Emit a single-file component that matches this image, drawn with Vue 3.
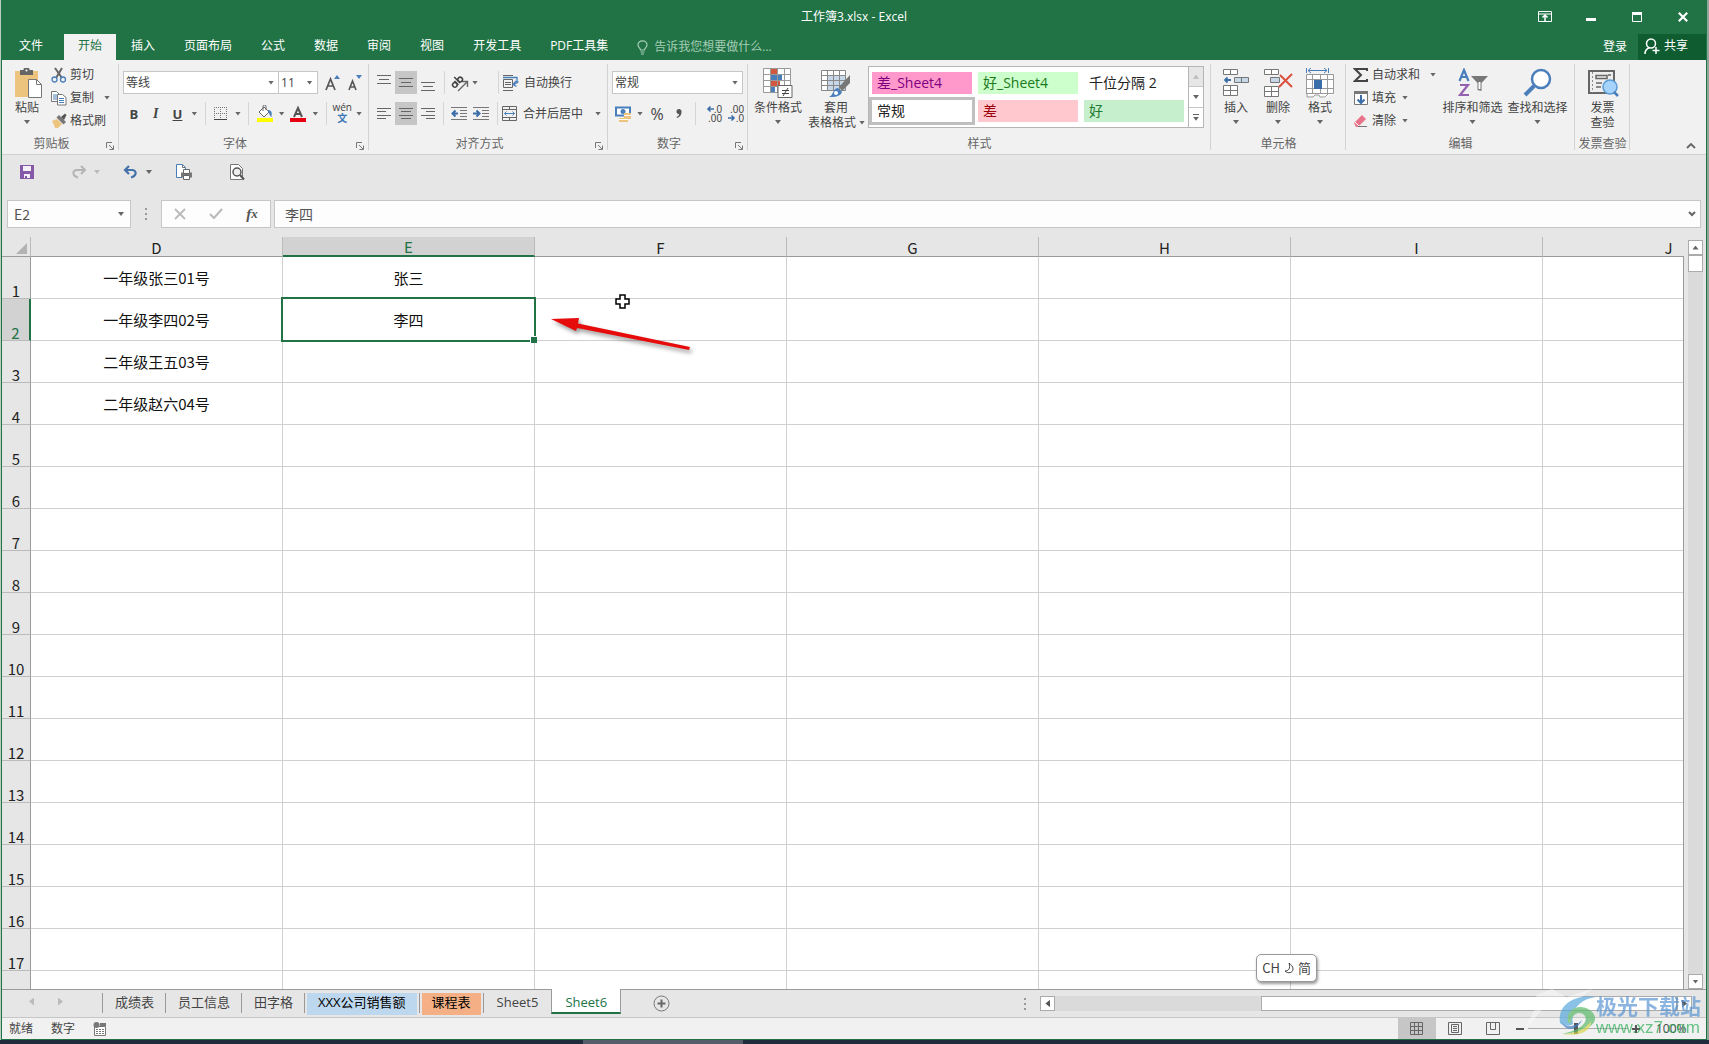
<script setup>
import { ref } from 'vue'

const menus = ['插入', '页面布局', '公式', '数据', '审阅', '视图', '开发工具', 'PDF工具集']
const columns = ['D', 'E', 'F', 'G', 'H', 'I', 'J']
const cells = {
  D1: '一年级张三01号', D2: '一年级李四02号', D3: '二年级王五03号', D4: '二年级赵六04号',
  E1: '张三', E2: '李四',
}
const rows = Array.from({ length: 17 }, (_, i) => i + 1)
const activeCol = 'E'
const activeRow = 2
const nameBox = ref('E2')
const formula = ref('李四')
const styles = [
  { name: '差_Sheet4', kind: 'pink' },
  { name: '好_Sheet4', kind: 'mint' },
  { name: '千位分隔 2', kind: 'plain' },
  { name: '常规', kind: 'picked' },
  { name: '差', kind: 'bad' },
  { name: '好', kind: 'good' },
]
const sheets = [
  { name: '成绩表' }, { name: '员工信息' }, { name: '田字格' },
  { name: 'XXX公司销售额', kind: 'blue' }, { name: '课程表', kind: 'orange' },
  { name: 'Sheet5', kind: 'latin' }, { name: 'Sheet6', kind: 'latin current' },
]
</script>

<template>
  <div class="desktop">
    <div class="app">
      <header class="titlebar">
        <h1>工作簿3.xlsx - Excel</h1>
        <div class="winbtns">
          <button aria-label="功能区显示选项"><svg width="14" height="12" viewBox="0 0 14 12"><path d="M.5 .5h13v10H.5zM1 3h12" fill="none" stroke="#fff" /><path d="M7 4v6M4.500 6.500L7 4l2.500 2.500" fill="none" stroke="#fff" stroke-width="1.500" /></svg></button>
          <button aria-label="最小化"><svg width="10" height="10" viewBox="0 0 10 10"><path d="M0 6h10v3H0z" fill="#fff" /></svg></button>
          <button aria-label="最大化"><svg width="10" height="10" viewBox="0 0 10 10"><path d="M.5 .5h9v9h-9z" fill="none" stroke="#fff" /><path d="M0 0h10v3H0z" fill="#fff" /></svg></button>
          <button aria-label="关闭"><svg width="10" height="10" viewBox="0 0 10 10"><path d="M.8 .8l8.400 8.400M9.200 .8L.8 9.200" stroke="#fff" stroke-width="2.200" /></svg></button>
        </div>
      </header>

      <nav class="menubar">
        <button class="file">文件</button>
        <button class="open">开始</button>
        <button v-for="m in menus" :key="m">{{ m }}</button>
        <button class="tell">
          <svg width="11" height="15" viewBox="0 0 11 15"><path d="M3.500 10C3.500 8 1 7.500 1 4.800a4.500 4 0 0 1 9 0C10 7.500 7.500 8 7.500 10zM3.500 12h4M4 14h3" fill="none" stroke="#a5cdb5" stroke-width="1.200" /></svg>
          告诉我您想要做什么...
        </button>
        <span class="grow"></span>
        <button class="login">登录</button>
        <button class="share">
          <svg width="16" height="17" viewBox="0 0 16 17"><circle cx="7" cy="5.500" r="4.500" fill="none" stroke="#fff" stroke-width="1.500" /><path d="M1 16c0-4 2-5.500 4.500-6.500M12 9v7M8.500 12.500h7" fill="none" stroke="#fff" stroke-width="1.500" /></svg>
          共享
        </button>
      </nav>

      <section class="ribbon">
        <div class="group clip">
          <div class="body">
            <button class="big paste">
              <svg width="30" height="30" viewBox="-2 0 30 30"><path d="M1 3h23v26H1z" fill="#ecc47d" /><path d="M6 2h3.500a3 3 0 0 1 6 0H19v5H6z" fill="#666" /><circle cx="12.500" cy="2.500" r="1" fill="#fff" /><path d="M14.500 11.500h8l5 5v13h-13z" fill="#fff" stroke="#777" /><path d="M22.500 11.500v5h5" fill="none" stroke="#777" /></svg>
              <span>粘贴</span><i class="caret"></i>
            </button>
            <div class="stack">
              <button><svg width="16" height="16" viewBox="0 0 16 16"><path d="M4 1l7 10M11 1L5 11" stroke="#666" stroke-width="2" /><circle cx="3.500" cy="12.500" r="2.500" fill="none" stroke="#4a7ebb" stroke-width="1.300" /><circle cx="12" cy="12.500" r="2.500" fill="none" stroke="#4a7ebb" stroke-width="1.300" /></svg>剪切</button>
              <button><svg width="16" height="16" viewBox="0 0 16 16"><path d="M.5 1.500h5l3 3v7h-8z" fill="#fff" stroke="#777" /><path d="M2 5h4M2 7h4M2 9h4" stroke="#4a7ebb" /><path d="M6.500 4.500h5l3.500 3v7.500H6.500z" fill="#fff" stroke="#777" /><path d="M8 8.500h5M8 10.500h5M8 12.500h5" stroke="#4a7ebb" /></svg>复制<i class="caret far"></i></button>
              <button><svg width="16" height="16" viewBox="0 0 16 16"><path d="M1 8l5-2 5 5-4 4H4l-1-3z" fill="#ecc47d" /><path d="M5.500 4.500L8 2l7 7-2.500 2.500z" fill="#777" /><path d="M10 4l4-3.500L15.500 2 13 7z" fill="#555" /></svg>格式刷</button>
            </div>
          </div>
          <footer>剪贴板<svg class="launch" width="8" height="8" viewBox="0 0 8 8"><path d="M.5 6V.5H6M3 3l4 4M7.500 3.500v4h-4" fill="none" stroke="#777" /></svg></footer>
        </div>

        <div class="group font">
          <div class="body lines">
            <div class="row">
              <span class="combo wide"><select aria-label="字体"><option>等线</option></select><i class="caret"></i></span>
              <span class="combo size"><select aria-label="字号"><option>11</option></select><i class="caret"></i></span>
              <button class="ic" aria-label="增大字号"><svg width="16" height="16" viewBox="0 0 16 16"><path d="M2 15L6.500 4 11 15M3.500 11h6" fill="none" stroke="#555" stroke-width="1.700" /><path d="M10 4l3-4 3 4z" fill="#4a7ebb" /></svg></button>
              <button class="ic" aria-label="减小字号"><svg width="16" height="16" viewBox="0 0 16 16"><path d="M3 15l3.500-9 3.500 9M4 12h5" fill="none" stroke="#555" stroke-width="1.600" /><path d="M10 0h6l-3 4z" fill="#4a7ebb" /></svg></button>
            </div>
            <div class="row">
              <button class="ic b">B</button><button class="ic i">I</button><button class="ic u">U</button><i class="caret"></i><i class="sep"></i>
              <button class="ic" aria-label="边框"><svg width="14" height="14" viewBox="0 0 14 14"><path d="M.5 0v13M6.500 0v13M12.500 0v13M0 .5h13M0 6.500h13" stroke="#777" stroke-dasharray="1 1" /><path d="M0 12.500h13" stroke="#444" /></svg></button><i class="caret"></i><i class="sep"></i>
              <button class="ic" aria-label="填充颜色"><svg width="18" height="18" viewBox="0 0 18 18"><path d="M3 7l5-5 5 5-5 5z" fill="#fff" stroke="#666" /><path d="M7 6V1.500a1.500 1.500 0 0 1 3 0V5" fill="none" stroke="#666" /><path d="M12 5c4 0 4 3 3.500 7-2-1-2-4-3.500-5z" fill="#4a7ebb" /><path d="M1 13h16v4H1z" fill="#ff0" /></svg></button><i class="caret"></i>
              <button class="ic" aria-label="字体颜色"><svg width="18" height="18" viewBox="0 0 18 18"><path d="M5 12L9 3l4 9M6.500 9h5" fill="none" stroke="#555" stroke-width="2" /><path d="M1 13h16v4H1z" fill="#e60012" /></svg></button><i class="caret"></i><i class="sep"></i>
              <button class="ic pinyin"><span>wén</span><b>文</b></button><i class="caret"></i>
            </div>
          </div>
          <footer>字体<svg class="launch" width="8" height="8" viewBox="0 0 8 8"><path d="M.5 6V.5H6M3 3l4 4M7.500 3.500v4h-4" fill="none" stroke="#777" /></svg></footer>
        </div>

        <div class="group align">
          <div class="body lines">
            <div class="row">
              <button class="ic" aria-label="顶端对齐"><svg width="14" height="16" viewBox="0 0 14 16"><path d="M0 .5h14M2 4.500h10M0 8.500h14" stroke="#666" /></svg></button>
              <button class="ic on" aria-label="垂直居中"><svg width="14" height="16" viewBox="0 0 14 16"><path d="M0 3.500h14M2 7.500h10M0 11.500h14" stroke="#666" /></svg></button>
              <button class="ic" aria-label="底端对齐"><svg width="14" height="16" viewBox="0 0 14 16"><path d="M0 7.500h14M2 11.500h10M0 15.500h14" stroke="#666" /></svg></button>
              <i class="sep"></i>
              <button class="ic orient" aria-label="方向"><svg width="20" height="20" viewBox="0 0 20 20"><path d="M9 18l9-9M13 8.500h5.500V14" fill="none" stroke="#666" stroke-width="1.400" /><g transform="rotate(-45 8 9)" fill="none" stroke="#444" stroke-width="1.500"><circle cx="4.500" cy="9.500" r="2.300" /><path d="M7 6.500V12M9.500 3.500V12" /><circle cx="12" cy="9.500" r="2.300" /></g></svg><i class="caret"></i></button>
              <i class="sep"></i>
              <button class="text"><svg width="16" height="16" viewBox="0 0 16 16"><path d="M0 .5h10M0 15.500h10M.5 4.500h9v8h-9zM2 7.500h6M2 9.500h6" fill="none" stroke="#666" /><path d="M0 2.500h14v6M15.500 6.500l-5 3.500M13 6l-3 3.500 3.500 2" fill="none" stroke="#4a7ebb" stroke-width="1.300" /></svg>自动换行</button>
            </div>
            <div class="row">
              <button class="ic" aria-label="左对齐"><svg width="14" height="12" viewBox="0 0 14 12"><path d="M0 .5h14M0 3.500h9M0 7.500h14M0 10.500h9" stroke="#666" /></svg></button>
              <button class="ic on" aria-label="居中"><svg width="14" height="12" viewBox="0 0 14 12"><path d="M0 .5h14M2 3.500h10M0 7.500h14M2 10.500h10" stroke="#666" /></svg></button>
              <button class="ic" aria-label="右对齐"><svg width="14" height="12" viewBox="0 0 14 12"><path d="M0 .5h14M5 3.500h9M0 7.500h14M5 10.500h9" stroke="#666" /></svg></button>
              <i class="sep"></i>
              <button class="ic" aria-label="减少缩进"><svg width="16" height="13" viewBox="0 0 16 13"><path d="M0 .5h16M9 3.500h7M9 6.500h7M9 9.500h7M0 12.500h16" stroke="#777" /><path d="M7 6.500H2M4.500 3.500l-3 3 3 3" fill="none" stroke="#3b6da8" stroke-width="2" /></svg></button>
              <button class="ic" aria-label="增加缩进"><svg width="16" height="13" viewBox="0 0 16 13"><path d="M0 .5h16M9 3.500h7M9 6.500h7M9 9.500h7M0 12.500h16" stroke="#777" /><path d="M0 6.500h6M3.500 3.500l3 3-3 3" fill="none" stroke="#3b6da8" stroke-width="2" /></svg></button>
              <i class="sep"></i>
              <button class="text"><svg width="16" height="16" viewBox="0 0 16 16"><path d="M.5 .5h14v14H.5zM.5 3.500h14M.5 11.500h14M7.500 0v3.500M7.500 11.500V15" fill="none" stroke="#666" /><path d="M2.500 7.500h10M4.500 5.500l-2 2 2 2M10.500 5.500l2 2-2 2" fill="none" stroke="#4a7ebb" /></svg>合并后居中<i class="caret far"></i></button>
            </div>
          </div>
          <footer>对齐方式<svg class="launch" width="8" height="8" viewBox="0 0 8 8"><path d="M.5 6V.5H6M3 3l4 4M7.500 3.500v4h-4" fill="none" stroke="#777" /></svg></footer>
        </div>

        <div class="group number">
          <div class="body lines">
            <div class="row"><span class="combo full"><select aria-label="数字格式"><option>常规</option></select><i class="caret"></i></span></div>
            <div class="row">
              <button class="ic" aria-label="会计数字格式"><svg width="18" height="16" viewBox="0 0 18 16"><path d="M2 1.500h14v8H2z" fill="#fff" stroke="#4a7ebb" stroke-width="2" /><circle cx="9" cy="5.500" r="2.500" fill="#4a7ebb" /><path d="M10 7h7v6h-3v3H5v-4h5z" fill="#ecc47d" /><path d="M10 9.500h7M5 13.500h9" stroke="#fff" /></svg></button><i class="caret"></i>
              <button class="ic pct">%</button>
              <button class="ic" aria-label="千位分隔样式"><svg width="6" height="10" viewBox="0 0 6 10"><path d="M3 0a2.500 2.500 0 0 1 2.500 3C5.500 6 4 8 1 9l-.5-1C2 7.500 3 6.500 3 5a2.500 2.500 0 0 1 0-5z" fill="#555" /></svg></button>
              <i class="sep"></i>
              <button class="ic dec" aria-label="增加小数位数"><span><svg width="8" height="8" viewBox="0 0 8 8"><path d="M8 4H2M4.500 1.500L2 4l2.500 2.500" fill="none" stroke="#3b6da8" stroke-width="1.600" /></svg>.0</span><span>.00</span></button>
              <button class="ic dec" aria-label="减少小数位数"><span>.00</span><span><svg width="8" height="8" viewBox="0 0 8 8"><path d="M0 4h6M3.500 1.500L6 4 3.500 6.500" fill="none" stroke="#3b6da8" stroke-width="1.600" /></svg>.0</span></button>
            </div>
          </div>
          <footer>数字<svg class="launch" width="8" height="8" viewBox="0 0 8 8"><path d="M.5 6V.5H6M3 3l4 4M7.500 3.500v4h-4" fill="none" stroke="#777" /></svg></footer>
        </div>

        <div class="group style">
          <div class="body">
            <button class="big mid">
              <svg width="30" height="30" viewBox="0 0 30 30"><path d="M.5 .5h27v24H.5z" fill="#fff" /><path d="M8 1h6v6H8z" fill="#d2583f" /><path d="M8 7h11v5H8z" fill="#4a7ebb" /><path d="M8 13h9v5H8z" fill="#d2583f" /><path d="M8 19h4v5H8z" fill="#4a7ebb" /><path d="M.5 .5h27v24H.5zM7.500 0v24M14.500 0v24M21.500 0v24M0 6.500h27M0 12.500h27M0 18.500h27" fill="none" stroke="#999" /><path d="M15 17.500h14v12H15z" fill="#fff" stroke="#666" /><path d="M19 22.500h7M19 25.500h7M25 20l-5 8" stroke="#444" /></svg>
              <span>条件格式</span><i class="caret"></i>
            </button>
            <button class="big mid">
              <svg width="30" height="30" viewBox="0 0 30 30"><path d="M.5 2.500h24v20H.5z" fill="#fff" /><path d="M6 8h19v14H6z" fill="#c5d7e8" /><path d="M.5 2.500h24v20H.5zM6.500 2v20M12.500 2v20M18.500 2v20M0 7.500h24M0 12.500h24M0 17.500h24" fill="none" stroke="#888" /><path d="M29 7v8l-8 8-3-4z" fill="#777" /><path d="M17 20l4 4c-2 5-8 5-13 5 5-2 3-8 9-9z" fill="#4a7ebb" /><circle cx="15" cy="25" r="2" fill="#fff" /></svg>
              <span>套用</span><span class="inline">表格格式<i class="caret"></i></span>
            </button>
            <div class="gallery">
              <div class="swatches"><button v-for="s in styles" :key="s.name" :class="s.kind">{{ s.name }}</button></div>
              <div class="gscroll"><button class="off" aria-label="上"><i class="caret up"></i></button><button aria-label="下"><i class="caret"></i></button><button class="more" aria-label="其他"><i class="caret"></i></button></div>
            </div>
          </div>
          <footer>样式</footer>
        </div>

        <div class="group cell">
          <div class="body">
            <button class="big slim">
              <svg width="28" height="30" viewBox="0 0 28 30"><path d="M1.500 1.500h14v5h-14zM8.500 1.500v5M1.500 17.500h14v10h-14zM8.500 17.500v10M1.500 22.500h14" fill="#fff" stroke="#777" /><path d="M12.500 9.500h14v5h-14zM19.500 9.500v5" fill="#c5d7e8" stroke="#777" /><path d="M9 12H3M5.500 9.500L3 12l2.500 2.500" fill="none" stroke="#3b6da8" stroke-width="1.800" /></svg>
              <span>插入</span><i class="caret"></i>
            </button>
            <button class="big slim">
              <svg width="30" height="30" viewBox="0 0 30 30"><path d="M1.500 1.500h14v5h-14zM8.500 1.500v5M1.500 18.500h14v10h-14zM8.500 18.500v10M1.500 23.500h14" fill="#fff" stroke="#777" /><path d="M7.500 9.500h9v5h-9z" fill="#c5d7e8" stroke="#777" /><path d="M17 7l12 12M29 6L16 19" stroke="#d9503f" stroke-width="2" /></svg>
              <span>删除</span><i class="caret"></i>
            </button>
            <button class="big slim">
              <svg width="30" height="30" viewBox="0 0 30 30"><path d="M1.500 0v5M23.500 0v5M3 2.500h19M6 0L3 2.500 6 5M19 0l3 2.500L19 5" fill="none" stroke="#4a7ebb" /><path d="M1.500 6.500h27v20l-5 1-3 2h-5l-3-2h-5l-6 1z" fill="#fff" /><path d="M1.500 6.500h27v19h-27zM7.500 6v20M15.500 6v20M22.500 6v20M1 11.500h27M1 20.500h27M2 25v4h6l2-2h4l1 2h5l3-3" fill="none" stroke="#999" /><path d="M9 12h8v9H9z" fill="#3b6da8" /></svg>
              <span>格式</span><i class="caret"></i>
            </button>
          </div>
          <footer>单元格</footer>
        </div>

        <div class="group edit">
          <div class="body">
            <div class="stack">
              <button><svg width="16" height="16" viewBox="0 0 16 16"><path d="M14 4V2H2l6 6-6 6h12v-2" fill="none" stroke="#444" stroke-width="2" /></svg>自动求和<i class="caret far"></i></button>
              <button><svg width="16" height="16" viewBox="0 0 16 16"><path d="M1.500 1.500h13v13h-13z" fill="#fff" stroke="#777" /><path d="M1 1h14v3H1z" fill="#777" /><path d="M8 5v8M4.500 9.500L8 13l3.500-3.500" fill="none" stroke="#3b6da8" stroke-width="2" /></svg>填充<i class="caret"></i></button>
              <button><svg width="16" height="16" viewBox="0 0 16 16"><path d="M1 10l8-8 4 4-8 8H3z" fill="#e8748b" /><path d="M2 9l4 4" stroke="#fff" /><path d="M5 13.500h9" stroke="#777" /></svg>清除<i class="caret"></i></button>
            </div>
            <button class="big wide">
              <svg width="30" height="30" viewBox="0 0 30 30"><path d="M1.500 13L6 2l4.500 11M3 9h6" fill="none" stroke="#4a7ebb" stroke-width="2.200" /><path d="M2 17h8L2 27h9" fill="none" stroke="#9460b0" stroke-width="2.200" /><path d="M13 8h17l-6.500 7v8l-4-1v-7z" fill="#777" /><path d="M20.500 14h2v7h-2z" fill="#fff" /></svg>
              <span>排序和筛选</span><i class="caret"></i>
            </button>
            <button class="big wide">
              <svg width="30" height="30" viewBox="0 0 30 30"><circle cx="18" cy="11" r="9" fill="#fff" stroke="#4a7ebb" stroke-width="2.500" /><path d="M11 18L2 27" stroke="#4a7ebb" stroke-width="4" /></svg>
              <span>查找和选择</span><i class="caret"></i>
            </button>
          </div>
          <footer>编辑</footer>
        </div>

        <div class="group bill">
          <div class="body">
            <button class="big fill">
              <svg width="32" height="30" viewBox="0 0 32 30"><path d="M2 3h25v22H2z" fill="#eee" stroke="#666" stroke-width="2" /><path d="M5.500 4v21" stroke="#888" stroke-dasharray="2 2" /><path d="M9 7.500h11v3H9zM9 15h6M9 19h5M21 7h3" fill="none" stroke="#666" stroke-width="1.500" /><circle cx="23" cy="19" r="7" fill="#a5d3fb" stroke="#5b9bd5" stroke-width="1.500" /><path d="M27 24l4 4" stroke="#4a7ebb" stroke-width="2.500" /></svg>
              <span>发票</span><span>查验</span>
            </button>
          </div>
          <footer>发票查验</footer>
        </div>
        <button class="collapse" aria-label="折叠功能区"><svg width="10" height="6" viewBox="0 0 10 6"><path d="M1 5l4-4 4 4" fill="none" stroke="#666" stroke-width="1.800" /></svg></button>
      </section>

      <div class="quick">
        <button aria-label="保存"><svg width="16" height="16" viewBox="0 0 16 16"><path d="M1 1h14v14H1z" fill="#8558a8" /><path d="M4 2h8v5H4zM5 10h6v4H5z" fill="#f5f0f8" /><path d="M6 12h2v2H6z" fill="#8558a8" /></svg></button>
        <button class="drop" aria-label="恢复"><svg width="16" height="14" viewBox="0 0 16 14"><path d="M10 1l4 4-4 4M14 5H6C1 5 1 11 7 12.500" fill="none" stroke="#b5b5b5" stroke-width="2" /></svg><i class="caret pale"></i></button>
        <button class="drop" aria-label="撤消"><svg width="16" height="14" viewBox="0 0 16 14"><path d="M6 1L2 5l4 4M2 5h7c5 0 5 6-1 7.500" fill="none" stroke="#4472a8" stroke-width="2.200" /></svg><i class="caret"></i></button>
        <button aria-label="快速打印"><svg width="18" height="18" viewBox="0 0 18 18"><path d="M7 14.500H1.500V1.500h6l3 3V7" fill="#fff" stroke="#4a7ebb" /><path d="M7.500 1.500v3h3" fill="none" stroke="#777" /><path d="M6 9.500h11v5H6z" fill="#777" /><path d="M8.500 6.500h6v4h-6zM8.500 12.500h6v4h-6z" fill="#fff" stroke="#666" /></svg></button>
        <button aria-label="打印预览"><svg width="16" height="18" viewBox="0 0 16 18"><path d="M1.500 1.500h8l4 4v11h-12z" fill="#fff" stroke="#777" /><circle cx="8" cy="9" r="4" fill="#eee" stroke="#555" stroke-width="1.500" /><path d="M11 12l4 4.500" stroke="#555" stroke-width="2" /></svg></button>
      </div>

      <div class="formulabar">
        <div class="namebox"><input v-model="nameBox" aria-label="名称框" /><i class="caret"></i></div>
        <i class="dots"></i>
        <div class="fxbox">
          <button aria-label="取消"><svg width="12" height="12" viewBox="0 0 12 12"><path d="M1 1l10 10M11 1L1 11" stroke="#bbb" stroke-width="1.800" /></svg></button>
          <button aria-label="输入"><svg width="14" height="12" viewBox="0 0 14 12"><path d="M1 6l4 4 8-9" fill="none" stroke="#bbb" stroke-width="2.200" /></svg></button>
          <button class="fx">f<small>x</small></button>
        </div>
        <div class="formula"><input v-model="formula" aria-label="编辑栏" /><svg width="8" height="6" viewBox="0 0 8 6"><path d="M1 1l3 3 3-3" fill="none" stroke="#666" stroke-width="2" /></svg></div>
      </div>

      <main class="sheet">
        <div class="viewport">
          <table>
            <colgroup><col class="rowcol" /><col v-for="c in columns" :key="c" class="datacol" /></colgroup>
            <thead>
              <tr>
                <th class="corner"><svg width="11" height="11" viewBox="0 0 11 11"><path d="M11 0v11H0z" fill="#b3b3b3" /></svg></th>
                <th v-for="c in columns" :key="c" :class="{ sel: c === activeCol }">{{ c }}</th>
              </tr>
            </thead>
            <tbody>
              <tr v-for="r in rows" :key="r">
                <th :class="{ sel: r === activeRow }">{{ r }}</th>
                <td v-for="c in columns" :key="c" :class="{ active: c === activeCol && r === activeRow }">{{ cells[c + r] }}</td>
              </tr>
              <tr><th></th><td v-for="c in columns" :key="c"></td></tr>
            </tbody>
          </table>
          <svg class="pointer" width="15" height="15" viewBox="0 0 15 15"><path d="M5 1h5v4h4v5h-4v4H5v-4H1V5h4z" fill="#fff" stroke="#000" stroke-width="1.500" /></svg>
          <svg class="arrow" width="150" height="50" viewBox="0 0 150 50"><path d="M6 9l28-1-1 5.500 112 23.500-1 3-112-22-1 3z" fill="#e60c0c" /></svg>
          <div class="ime">CH <svg width="10" height="12" viewBox="0 0 10 12"><path d="M5 1c2 2 4 3 4 6 0 4-5 5-8 2 3 0 6-2 4-8z" fill="none" stroke="#444" /></svg> 简</div>
        </div>
        <div class="vscroll"><button aria-label="向上滚动"><i class="caret up"></i></button><div class="thumb"></div><span class="grow"></span><button aria-label="向下滚动"><i class="caret"></i></button></div>
      </main>

      <div class="tabs">
        <div class="tabnav"><i class="tri left"></i><i class="tri right"></i></div>
        <div class="tablist"><button v-for="s in sheets" :key="s.name" :class="s.kind"><span>{{ s.name }}</span></button></div>
        <button class="add" aria-label="新工作表"><svg width="17" height="17" viewBox="0 0 17 17"><circle cx="8.500" cy="8.500" r="7.500" fill="none" stroke="#777" /><path d="M8.500 4.500v8M4.500 8.500h8" stroke="#666" stroke-width="2" /></svg></button>
        <span class="grow"></span>
        <div class="hscroll">
          <i class="dots"></i>
          <button aria-label="向左滚动"><i class="tri left dark"></i></button>
          <div class="track"><div class="hthumb"></div></div>
          <button aria-label="向右滚动"><i class="tri right dark"></i></button>
        </div>
      </div>

      <footer class="status">
        <span>就绪</span><span>数字</span>
        <svg width="14" height="14" viewBox="0 0 14 14"><path d="M1.500 4.500h11v9h-11z" fill="#fff" stroke="#777" /><path d="M3 7.500h9M3 9.500h9M3 11.500h9" stroke="#777" stroke-dasharray="2 1" /><path d="M7 1h6v3H7z" fill="#777" /><circle cx="3.500" cy="3" r="3" fill="#777" /></svg>
        <span class="grow"></span>
        <div class="views">
          <button class="on" aria-label="普通"><svg width="14" height="14" viewBox="0 0 14 14"><path d="M.5 .5h12v12H.5zM4.500 0v13M8.500 0v13M0 4.500h13M0 8.500h13" fill="none" stroke="#666" /></svg></button>
          <button aria-label="页面布局"><svg width="14" height="14" viewBox="0 0 14 14"><path d="M.5 .5h13v12H.5zM3.500 2.500h7v8h-7zM5 4.500h4M5 6.500h4M5 8.500h4" fill="none" stroke="#666" /></svg></button>
          <button aria-label="分页预览"><svg width="14" height="14" viewBox="0 0 14 14"><path d="M.5 .5h13v12H.5zM4.500 0v7.500h5V0" fill="none" stroke="#666" /></svg></button>
        </div>
        <div class="zoom"><button aria-label="缩小"><i></i></button><input type="range" min="0" max="100" value="48" aria-label="显示比例" /><button aria-label="放大" class="plus"><i></i></button><span>100%</span></div>
      </footer>

      <div class="mark">
        <svg width="96" height="52" viewBox="0 0 96 52"><path d="M14 8L30 2l14 8 26-8-18 14-30 4-20 24 14-28z" fill="#fff" opacity=".6" /><path d="M38 36C35 16 55 7 74 10 59 12 48 22 51 37c-4 3-10 2-13-1z" fill="#58a9dc" /><path d="M46 36c-3-15 12-20 22-13 12 9 3 22-28 24 15-3 27-10 23-18-4-6-14-3-14 7z" fill="#5dba6c" /><path d="M39 34c4 8 15 6 21-1-4 10-17 13-21 1z" fill="#3d7fc4" /><path d="M40 47c14 0 25-6 29-13 0 10-10 16-29 13z" fill="#d6d64f" /></svg>
        <div><b>极光下载站</b><span>www.xz7.com</span></div>
      </div>
    </div>
    <div class="taskbar"><i></i></div>
  </div>
</template>

<style>
body { margin: 0; background: #202b3a; }
</style>

<style scoped>
* { box-sizing: border-box; }
.desktop { height: 100vh; display: flex; flex-direction: column; overflow: hidden; background: linear-gradient(90deg, #b9cfc2 50%, #8ea79b 50%); padding: 0 2px 0 1px; font: 12px/16px "Open Sans", "Noto Sans CJK SC", sans-serif; color: #444; }
.app { flex: 1; min-height: 0; position: relative; display: flex; flex-direction: column; background: #e6e6e6; border: 1px solid #217346; border-top: 0; }
.taskbar { height: 4px; margin: 0 -2px 0 -1px; background: #202c3c; display: flex; justify-content: center; }
.taskbar i { width: 160px; margin-right: 384px; background: #555c6a; }
button { font: inherit; color: inherit; background: none; border: 0; padding: 0; margin: 0; display: flex; align-items: center; white-space: nowrap; }
svg { display: block; flex: none; }
input, select { font: inherit; color: inherit; outline: 0; }
.grow { flex: 1; }
.caret { flex: none; width: 12px; height: 4px; display: block; background: #666; clip-path: polygon(3px 0, 9px 0, 6px 4px); }
.caret.up { clip-path: polygon(3px 4px, 9px 4px, 6px 0); }
.caret.pale { background: #bbb; }

.titlebar { height: 34px; flex: none; display: grid; grid-template-columns: 1fr auto 1fr; align-items: center; background: #217346; color: #fff; }
.titlebar h1 { grid-column: 2; margin: 0; font-size: 12px; line-height: 34px; font-weight: 400; }
.winbtns { display: flex; justify-content: flex-end; }
.winbtns button { width: 46px; height: 30px; justify-content: center; }

.menubar { height: 26px; flex: none; display: flex; gap: 1px; background: #217346; color: #fff; }
.menubar button { padding: 0 14px 2px; }
.menubar .file { padding: 0 20px 2px 17px; }
.menubar .open { background: #f1f1f1; color: #217346; }
.menubar .tell { gap: 6px; padding-bottom: 0; color: #a5cdb5; }
.menubar .login { padding: 0 10px 1px; }
.menubar .share { background: #0e5c2f; gap: 4px; padding: 0 18px 2px 6px; }

.ribbon { height: 95px; flex: none; display: flex; background: #f1f1f1; border-bottom: 1px solid #d0d0d0; position: relative; }
.group { flex: none; display: flex; flex-direction: column; position: relative; }
.group::after { content: ""; position: absolute; right: 0; top: 4px; bottom: 4px; width: 1px; background: #d2d2d2; }
.group footer { height: 20px; line-height: 20px; text-align: center; color: #666; }
.launch { position: absolute; right: 5px; bottom: 4px; }
.body { height: 74px; display: flex; padding: 0 4px; }
.clip { width: 117px; } .font { width: 250px; } .align { width: 239px; } .number { width: 140px; }
.style { width: 463px; } .cell { width: 135px; } .edit { width: 229px; } .bill { width: 55px; }
.clip footer, .font footer, .align footer, .number footer { padding-right: 18px; }
.style .body { padding: 0 1px; } .bill .body { padding: 0; }
.big { flex-direction: column; padding-top: 8px; line-height: 15px; }
.big svg { margin-bottom: 2px; }
.big > .caret { margin-top: 5px; }
.big .inline { display: flex; align-items: center; margin-left: 4px; }
.paste { width: 42px; } .mid { width: 58px; } .slim { width: 42px; } .wide.big { width: 65px; } .fill { width: 100%; }
.stack { display: flex; flex-direction: column; padding-top: 3px; }
.stack button { height: 23px; gap: 3px; padding-left: 3px; }
.edit .stack { width: 90px; }
.far { margin-left: 4px; }
.lines { flex-direction: column; gap: 8px; padding-top: 11px; }
.row { display: flex; align-items: center; height: 23px; }
.combo { height: 23px; display: flex; align-items: center; position: relative; background: #fff; border: 1px solid #c6c6c6; }
.combo select { appearance: none; width: 100%; height: 21px; border: 0; background: none; padding: 0 2px; }
.combo .caret { position: absolute; right: 1px; }
.combo.wide { width: 158px; } .combo.size { width: 40px; margin-left: -1px; margin-right: 4px; } .combo.full { width: 131px; }
.ic { width: 22px; height: 23px; justify-content: center; }
.on { background: #c6c6c6; }
.orient { width: 44px; justify-content: flex-start; }
.sep { width: 10px; height: 23px; background: linear-gradient(#d5d5d5, #d5d5d5) center / 1px 100% no-repeat; }
.b { font-weight: 700; font-size: 13px; } .i { font: italic 700 14px "Liberation Serif", serif; } .u { font-weight: 700; text-decoration: underline; font-size: 13px; }
.pinyin { flex-direction: column; font-size: 10px; line-height: 9px; } .pinyin b { color: #3b76b5; line-height: 12px; }
.text { gap: 5px; }
.pct { font-size: 16px; }
.dec { flex-direction: column; align-items: flex-end; font: 10px/9px "Liberation Sans", sans-serif; } .dec span { display: flex; align-items: center; }
.gallery { height: 62px; margin: 6px 0 0 3px; display: flex; background: #fff; border: 1px solid #b5b5b5; width: 336px; font-size: 14px; }
.swatches { flex: 1; display: grid; grid-template-columns: repeat(3, 100px); grid-template-rows: 22px 22px; gap: 6px; padding: 5px 3px; color: #222; }
.swatches button { padding-left: 5px; }
.pink { background: #ff99cc; color: #800080; } .mint { background: #ccffcc; color: #1c7a1c; }
.picked { outline: 3px solid #bfbfbf; } .bad { background: #ffc7ce; color: #9c0006; } .good { background: #c6efce; color: #217a30; }
.gscroll { width: 15px; display: flex; flex-direction: column; border-left: 1px solid #b5b5b5; }
.gscroll button { flex: 1; justify-content: center; border-top: 1px solid #c6c6c6; }
.gscroll button:first-child { border-top: 0; background: #e6e6e6; } .gscroll .off .caret { background: #bbb; }
.more { flex-direction: column; gap: 2px; } .more::before { content: ""; width: 6px; height: 1px; background: #666; }
.collapse { position: absolute; right: 10px; bottom: 5px; }

.quick { height: 45px; flex: none; display: flex; align-items: flex-start; padding: 8px 0 0 17px; gap: 36px; }
.quick button { height: 18px; gap: 4px; }
.quick .drop { margin-right: -16px; }

.formulabar { height: 28px; flex: none; display: flex; padding: 0 5px; color: #555; font-size: 14px; font-family: "Noto Sans CJK SC", sans-serif; }
.namebox, .fxbox, .formula { display: flex; align-items: center; background: #fdfdfd; border: 1px solid #c6c6c6; }
.namebox { width: 124px; padding-right: 3px; }
.formulabar input { flex: 1; min-width: 0; border: 0; background: none; padding: 0 6px; }
.formulabar .formula input { padding: 0 10px; }
.dots { width: 2px; height: 12px; align-self: center; background: repeating-linear-gradient(#999 0 2px, transparent 2px 5px); margin: 0 14px; }
.fxbox { width: 110px; } .fxbox button { flex: 1; justify-content: center; }
.fx { font: italic 700 15px "Liberation Serif", serif; } .fx small { font-size: 13px; }
.formula { flex: 1; margin-left: 3px; padding-right: 4px; }

.sheet { flex: 1; min-height: 0; display: flex; padding-top: 9px; }
.viewport { flex: 1; min-width: 0; overflow: hidden; position: relative; }
table { table-layout: fixed; width: 0; border-collapse: separate; border-spacing: 0; font: 15px/20px "Noto Sans CJK SC", sans-serif; color: #222; }
.rowcol { width: 29px; } .datacol { width: 252px; }
th, td { padding: 0; font-weight: 400; text-align: center; border-right: 1px solid #d0d0d0; border-bottom: 1px solid #d0d0d0; }
td { height: 42px; background: #fff; color: #111; }
thead th { height: 20px; padding-top: 2px; line-height: 17px; border-right-color: #bbb; border-bottom-color: #9b9b9b; }
tbody th { vertical-align: bottom; line-height: 15px; border-right-color: #9b9b9b; border-bottom-color: #bbb; }
.corner svg { margin: 2px 0 0 14px; }
thead .sel { background: #d2d2d2; color: #217346; border-bottom: 2px solid #217346; line-height: 16px; }
tbody .sel { background: #d2d2d2; color: #217346; border-right: 2px solid #217346; }
td.active { position: relative; }
td.active::before { content: ""; position: absolute; inset: -2px; border: 2px solid #217346; z-index: 1; }
td.active::after { content: ""; position: absolute; right: -3px; bottom: -3px; width: 6px; height: 6px; background: #217346; border: 1px solid #fff; border-width: 1px 0 0 1px; z-index: 2; }
.viewport::after { content: ""; position: absolute; right: 0; top: 19px; bottom: 0; width: 1px; background: #9b9b9b; }
.pointer { position: absolute; left: 613px; top: 57px; z-index: 3; }
.arrow { position: absolute; left: 543px; top: 73px; z-index: 3; filter: drop-shadow(2px 3px 2px #0006); }
.ime { position: absolute; right: 367px; bottom: 7px; height: 28px; padding: 0 5px; display: flex; align-items: center; gap: 4px; background: #fff; border: 1px solid #999; border-radius: 5px; box-shadow: 1px 2px 3px #0006; font: 13px/20px "Noto Sans CJK SC", sans-serif; }
.vscroll { width: 15px; margin: 3px 3px 0 4px; display: flex; flex-direction: column; background: #dadada; }
.vscroll button, .hscroll button { height: 15px; width: 15px; flex: none; justify-content: center; background: #fff; border: 1px solid #ababab; }
.thumb { height: 17px; background: #fff; border: 1px solid #ababab; }

.tabs { height: 28px; flex: none; display: flex; border-top: 1px solid #9b9b9b; }
.tabnav { width: 101px; display: flex; align-items: center; gap: 24px; padding: 0 0 3px 27px; border-right: 1px solid #999; margin: 3px 0 4px; }
.tri { width: 5px; height: 8px; background: #bbb; } .tri.left { clip-path: polygon(100% 0, 100% 100%, 0 50%); } .tri.right { clip-path: polygon(0 0, 100% 50%, 0 100%); } .tri.dark { background: #555; }
.tablist { display: flex; font-size: 13px; }
.tablist button { padding: 3px 0 2px; align-items: stretch; position: relative; }
.tablist span { display: block; padding: 0 12px; line-height: 18px; height: 22px; }
.tablist button::after { content: ""; width: 1px; height: 20px; margin-left: -1px; background: #999; }
.tablist .blue, .tablist .orange { color: #000; }
.tablist .blue span { background: #bdd7ee; margin: 0 3px 0 2px; padding: 0 11px; }
.tablist .orange span { background: #f4b084; margin: 0 3px 0 2px; padding: 0 10px; }
.tablist .latin span { padding: 0 13px; }
.tablist .latin::after { display: none; }
.tablist .current { margin-top: -1px; padding-top: 4px; height: 25px; background: #fff; color: #217346; border: 1px solid #9b9b9b; border-top: 0; border-bottom: 2px solid #217346; }
.add { margin-left: 32px; }
.hscroll { display: flex; align-items: center; width: 40%; margin-right: 14px; }
.track { flex: 1; height: 15px; background: #dadada; }
.hthumb { width: 67%; height: 15px; margin-left: auto; background: #fff; border: 1px solid #ababab; }

.status { height: 22px; flex: none; display: flex; align-items: center; background: #f1f1f1; border-top: 1px solid #c6c6c6; padding-left: 7px; gap: 18px; }
.views { display: flex; align-self: stretch; }
.views button { width: 38px; justify-content: center; }
.zoom { display: flex; align-items: center; width: 190px; margin-left: -14px; }
.zoom button { width: 8px; height: 16px; } .zoom button i { width: 8px; height: 2px; background: #555; }
.zoom .plus { background: linear-gradient(#555, #555) center / 2px 8px no-repeat; }
.zoom input { appearance: none; width: 100px; height: 16px; margin: 0 4px; background: linear-gradient(#aaa, #aaa) center / 100% 1px no-repeat; }
.zoom input::-webkit-slider-thumb { appearance: none; width: 4px; height: 11px; background: #555; }
.zoom span { margin-left: 16px; }

.mark { position: absolute; right: 5px; bottom: 0; display: flex; align-items: flex-end; opacity: .7; pointer-events: none; }
.mark svg { margin-right: -22px; }
.mark div { display: flex; flex-direction: column; }
.mark b { font: 700 21px/24px "Noto Sans CJK SC", sans-serif; color: #5b97d3; }
.mark span { font: 400 17px/22px "Liberation Sans", sans-serif; color: #2fae58; }
</style>
